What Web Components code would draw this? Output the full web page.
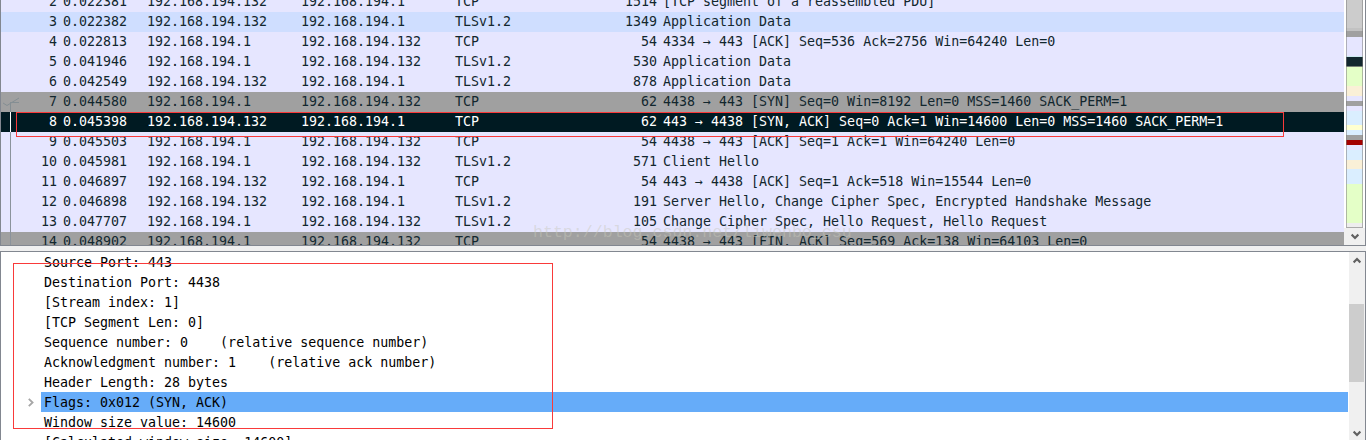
<!DOCTYPE html>
<html lang="en"><head><meta charset="utf-8"><title>Packet capture</title>
<style>body{margin:0;overflow:hidden}</style></head><body>
<capture-app></capture-app>
<script>
const define = (name, css, html, after) => customElements.define(name, class extends HTMLElement {
  connectedCallback() {
    if (this.shadowRoot) return;
    const root = this.attachShadow({ mode: 'open' });
    root.innerHTML = `<style>*{box-sizing:border-box}${css}</style>` + (typeof html === 'function' ? html(this) : html);
    if (after) after(this, root);
  }
});

define('packet-row', `
:host{display:grid;grid-template-columns:56px 6px 84px 154px 154px 154px 48px 6px 1fr;height:20px;line-height:20px;flex:none;white-space:pre;background:#e6e6ff;color:#12272e}
:host([kind=near]){background:#cfdeff}
:host([kind=gray]){background:#a0a0a0}
:host([kind=selected]){background:#001a22;color:#fff}
.r{text-align:right}`,
`<span class="r"></span><i></i><span></span><span></span><span></span><span></span><span class="r"></span><i></i><span></span>`,
(el, root) => {
  const cells = root.querySelectorAll('span');
  el.getAttribute('data').split('|').forEach((t, i) => cells[i].textContent = t);
});

define('scroll-arrow', `:host{display:flex;align-items:center;justify-content:center;height:17px;flex:none}svg{display:block}`,
el => `<svg width="8" height="7" viewBox="0 0 8 7" fill="none" stroke="#606060" stroke-width="2.2"><path d="${el.hasAttribute('up') ? 'M.6 5.4 4 2 7.4 5.4' : 'M.6 1.6 4 5 7.4 1.6'}"/></svg>`);

define('mini-map', `
:host{display:flex;flex-direction:column;width:21px;flex:none;background:#f0f0f0;position:relative}
.map{height:228px;margin-left:2px;width:17px;display:flex;flex-direction:column;border-bottom:1px solid #aaa;position:relative;box-shadow:-2px 0 #fff,2px 0 #fff}
.map::after{content:"";position:absolute;inset:0;border:solid rgba(128,128,128,.55);border-width:0 1px}
.map div{flex:none}
.line{position:absolute;left:0;right:0;top:3px;height:1px;background:#1374c9}`,
() => {
  const bands = [[28,'#ccc'],[3,'#c2c2c2'],[6,'#a0a0a0'],[19,'#e6e6ff'],[1,'#cdeaf0'],[9,'#12272e'],[1,'#788078'],[19,'#e4ffc7'],[10,'#faf0d7'],[5,'#e6e6ff'],[5,'#a0a0a0'],[5,'#e6e6ff'],[14,'#daeeff'],[5,'#ffffd0'],[5,'#daeeff'],[5,'#a0a0a0'],[5,'#a40000'],[5,'#e6e6ff'],[10,'#daeeff'],[9,'#faf0d7'],[15,'#daeeff'],[39,'#e4ffc7'],[4,'#eee']];
  return `<div class="line"></div><div class="map">${bands.map(([h, c]) => `<div style="height:${h}px;background:${c}"></div>`).join('')}</div><scroll-arrow></scroll-arrow>`;
});

define('packet-list', `
:host{display:flex;height:246px;border:solid #828790;border-width:0 1px 1px;overflow:hidden;position:relative;background:#fff}
.rows{flex:1;display:flex;flex-direction:column;margin-top:-8px;min-width:0}
svg{position:absolute;left:0;top:92px}
.mark{position:absolute;left:532px;top:221px;font:16.6px/24px "Liberation Mono",monospace;color:rgba(200,200,188,.45);white-space:pre}`,
() => {
  const A = '192.168.194.1', B = '192.168.194.132';
  const rows = [
    [2,'0.022381',B,A,'TCP',1514,'[TCP segment of a reassembled PDU]'],
    [3,'0.022382',B,A,'TLSv1.2',1349,'Application Data','near'],
    [4,'0.022813',A,B,'TCP',54,'4334 → 443 [ACK] Seq=536 Ack=2756 Win=64240 Len=0'],
    [5,'0.041946',A,B,'TLSv1.2',530,'Application Data'],
    [6,'0.042549',B,A,'TLSv1.2',878,'Application Data'],
    [7,'0.044580',A,B,'TCP',62,'4438 → 443 [SYN] Seq=0 Win=8192 Len=0 MSS=1460 SACK_PERM=1','gray'],
    [8,'0.045398',B,A,'TCP',62,'443 → 4438 [SYN, ACK] Seq=0 Ack=1 Win=14600 Len=0 MSS=1460 SACK_PERM=1','selected'],
    [9,'0.045503',A,B,'TCP',54,'4438 → 443 [ACK] Seq=1 Ack=1 Win=64240 Len=0'],
    [10,'0.045981',A,B,'TLSv1.2',571,'Client Hello'],
    [11,'0.046897',B,A,'TCP',54,'443 → 4438 [ACK] Seq=1 Ack=518 Win=15544 Len=0'],
    [12,'0.046898',B,A,'TLSv1.2',191,'Server Hello, Change Cipher Spec, Encrypted Handshake Message'],
    [13,'0.047707',A,B,'TLSv1.2',105,'Change Cipher Spec, Hello Request, Hello Request'],
    [14,'0.048902',A,B,'TCP',54,'4438 → 443 [FIN, ACK] Seq=569 Ack=138 Win=64103 Len=0','gray']];
  return `<div class="rows">${rows.map(r => `<packet-row kind="${r[7] || ''}" data="${r.slice(0, 7).join('|')}"></packet-row>`).join('')}</div><mini-map></mini-map>
  <svg width="20" height="154" fill="none"><path d="M2 11 6 13.5 18 6M9 10.5H18M9.5 10V20" stroke="#848e93"/><path d="M9.5 20V40" stroke="#fff"/><path d="M9.5 40V154" stroke="#8b939c"/></svg>
  <div class="mark">http://blog.csdn.net/liwenbo_csu</div>`;
});

define('detail-row', `
:host{display:flex;height:20px;line-height:22px;flex:none;white-space:pre;color:#000}
.g{width:40px;flex:none;display:flex;align-items:center;justify-content:flex-end;padding-right:7px}
.t{flex:1;padding-left:3px}
:host([selected]) .t{background:#66acf9}`,
el => `<div class="g">${el.hasAttribute('selected') ? '<svg width="6" height="9" fill="none" stroke="#a6a6a6" stroke-width="1.8"><path d="M.8.8 4.6 4.5.8 8.2"/></svg>' : ''}</div><div class="t"><slot></slot></div>`);

define('packet-details', `
:host{display:flex;height:189px;border:solid #828790;border-width:1px 1px 0;background:#fff;overflow:hidden}
.rows{flex:1;display:flex;flex-direction:column}
.bar{width:16px;margin-left:1px;background:#f0f0f0;display:flex;flex-direction:column;height:188px}
.thumb{margin-top:35px;height:78px;width:15px;background:#cdcdcd}
.bar .end{margin-top:auto;height:13px}`,
`<div class="rows"><detail-row>Source Port: 443</detail-row><detail-row>Destination Port: 4438</detail-row><detail-row>[Stream index: 1]</detail-row><detail-row>[TCP Segment Len: 0]</detail-row><detail-row>Sequence number: 0    (relative sequence number)</detail-row><detail-row>Acknowledgment number: 1    (relative ack number)</detail-row><detail-row>Header Length: 28 bytes</detail-row><detail-row selected>Flags: 0x012 (SYN, ACK)</detail-row><detail-row>Window size value: 14600</detail-row><detail-row>[Calculated window size: 14600]</detail-row></div>
<div class="bar"><scroll-arrow up></scroll-arrow><div class="thumb"></div><scroll-arrow class="end"></scroll-arrow></div>`);

define('capture-app', `
:host{display:flex;flex-direction:column;gap:5px;width:1366px;height:440px;overflow:hidden;background:#f0f0f0;position:relative;font:13.3px "DejaVu Sans Mono",monospace}
.note{position:absolute;border:1px solid #f93a3a}
.a{left:16px;top:112px;width:1268px;height:25px}
.b{left:13px;top:263px;width:540px;height:166px}`,
`<packet-list></packet-list><packet-details></packet-details><div class="note a"></div><div class="note b"></div>`);
</script></body></html>
